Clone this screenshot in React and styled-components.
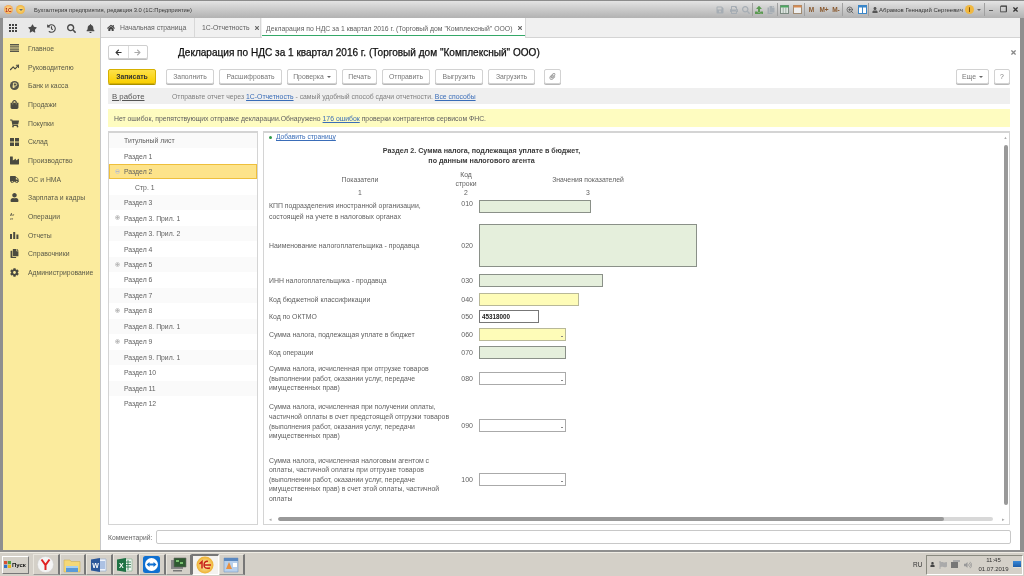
import React from 'react'
import styled, { createGlobalStyle } from 'styled-components'
import {
  FaStar, FaHistory, FaSearch, FaBell, FaHome, FaShoppingBag, FaShoppingCart, FaIndustry,
  FaTruck, FaUser, FaCopy, FaCog, FaPaperclip, FaSave, FaPrint, FaTimes, FaVolumeUp, FaFlag,
  FaArrowLeft, FaArrowRight, FaUpload,
} from 'react-icons/fa'
import { FiTrendingUp, FiZoomIn } from 'react-icons/fi'

const Global = createGlobalStyle`
  html, body { margin: 0; padding: 0; height: 576px; overflow: hidden; }
  body { font-family: "Liberation Sans", Arial, sans-serif; background: #d4d0c8; }
  * { box-sizing: border-box; }
`

// the reference is a scaled down capture, so everything is a touch soft
const Screen = styled.div`
  width: 1024px;
  height: 576px;
  display: flex;
  flex-direction: column;
  filter: blur(0.25px);
`

const Win = styled.div`
  height: 552px;
  display: flex;
  flex-direction: column;
  background: #8f8f8f;
  padding: 0 4px 2px 3px;
`

const TitleBar = styled.div`
  height: 18px;
  margin: 0 -4px 0 -3px;
  display: flex;
  align-items: center;
  padding: 0 0 0 4px;
  background: linear-gradient(#e4e4e4, #d4d4d4 30%, #b2b2b2);
  border-top: 1px solid #8c8c8c;
`

const Logo = styled.div`
  width: 9px;
  height: 9px;
  border-radius: 50%;
  margin-right: 3px;
  display: flex;
  align-items: center;
  justify-content: center;
  background: ${p => p.$red ? 'radial-gradient(#fff2a8, #f08a30)' : 'radial-gradient(#ffe27a, #e8a030)'};
  color: #b02010;
  font-size: 5px;
  font-weight: 700;
`

const AppName = styled.div`
  margin-left: 6px;
  font-size: 5.8px;
  color: #333;
  flex: 1;
  white-space: nowrap;
`

const TitleTools = styled.div`
  display: flex;
  align-items: center;
  height: 18px;
  padding-right: 3px;
`

const Tool = styled.span`
  width: ${p => p.$w || 12}px;
  display: flex;
  justify-content: center;
  align-items: center;
  color: ${p => p.$c || '#a6adb4'};
  font-size: ${p => p.$size || 8}px;
  font-weight: 700;
`

const ToolSep = styled.span`
  width: 1px;
  height: 13px;
  background: #a0a0a0;
`

const UserName = styled.span`
  display: flex;
  align-items: center;
  gap: 1px;
  width: 96px;
  padding-left: 3px;
  font-size: 6px;
  color: #333;
  white-space: nowrap;
`

const InfoDot = styled.span`
  width: 9px;
  height: 9px;
  border-radius: 50%;
  background: #f0b840;
  color: #805000;
  font-size: 7px;
  font-weight: 700;
  line-height: 9px;
  text-align: center;
`

const WinBody = styled.div`
  flex: 1;
  min-height: 0;
  display: flex;
  background: #fff;
`

const SidePane = styled.div`
  width: 98px;
  display: flex;
  flex-direction: column;
  border-right: 1px solid #c8c8c8;
`

const QuickBar = styled.div`
  height: 20px;
  display: flex;
  align-items: center;
  gap: 5.4px;
  padding-left: 3px;
  background: #e9e9e9;
  color: #4a4a4a;
  font-size: 9px;
`

const QuickIcon = styled.span`
  width: 14px;
  display: flex;
  justify-content: center;
`

const Dots = styled.span`
  display: grid;
  grid-template-columns: repeat(3, 2px);
  gap: 1px;
  & i { width: 2px; height: 2px; background: #444; }
`

const SideMenu = styled.div`
  flex: 1;
  background: #fbeb9d;
  padding-top: 1px;
`

const MenuItem = styled.div`
  height: 18.7px;
  display: flex;
  align-items: center;
  font-size: 6.85px;
  color: #5a5a48;
  white-space: nowrap;
`

const MenuGlyph = styled.span`
  width: 25px;
  padding-left: 7px;
  display: flex;
  justify-content: flex-start;
  align-items: center;
  color: #4a4a40;
  font-size: 9px;
`

const OpsGlyph = styled.span`
  font-size: 4px;
  line-height: 4px;
  color: #4a4a40;
`

const MainPane = styled.div`
  flex: 1;
  min-width: 0;
  display: flex;
  flex-direction: column;
`

const TabRow = styled.div`
  height: 20px;
  display: flex;
  background: #f0f0f0;
  border-bottom: 1px solid #d4d4d4;
`

const Tab = styled.div`
  width: ${p => p.$w}px;
  height: ${p => p.$active ? 20 : 19}px;
  display: flex;
  align-items: center;
  gap: 5px;
  padding: 0 0 0 ${p => p.$active ? 4 : 6}px;
  margin-right: ${p => p.$active ? 0 : 1}px;
  font-size: 6.85px;
  color: #5f5f5f;
  white-space: nowrap;
  background: ${p => p.$active ? '#fff' : '#f0f0f0'};
  border-right: 1px solid #d8d8d8;
  box-shadow: ${p => p.$active ? 'inset 0 -2px 0 #fff, inset 0 -3px 0 #34a868' : 'none'};
`

const TabClose = styled.span`
  margin-left: auto;
  margin-right: ${p => p.$far ? 5 : 7}px;
  color: #666;
  font-size: 6px;
  display: flex;
`

const Content = styled.div`
  flex: 1;
  min-height: 0;
  display: flex;
  flex-direction: column;
  padding: 0 10px 6px 7px;
`

const HeadRow = styled.div`
  height: 28px;
  display: flex;
  align-items: center;
`

const NavGroup = styled.div`
  width: 40px;
  height: 14px;
  display: flex;
  border: 1px solid #cfcfcf;
  border-radius: 2px;
  box-shadow: 0 1px 0 #bdbdbd;
  margin-right: 30px;
`

const NavBtn = styled.span`
  flex: 1;
  display: flex;
  justify-content: center;
  align-items: center;
  color: ${p => p.$off ? '#aaa' : '#333'};
  font-size: 7px;
  & + & { border-left: 1px solid #ddd; }
`

const FormTitle = styled.div`
  flex: 1;
  font-size: 10.05px;
  color: #111;
  -webkit-text-stroke: 0.25px #111;
  white-space: nowrap;
`

const CloseForm = styled.span`
  margin-right: -7px;
  color: #888;
  font-size: 7px;
  display: flex;
`

const CommandBar = styled.div`
  height: 15px;
  margin-top: 3px;
  display: flex;
  gap: 5px;
`

const Btn = styled.div`
  width: ${p => p.$w}px;
  margin-left: ${p => p.$ml || 0}px;
  display: flex;
  align-items: center;
  justify-content: center;
  gap: 3px;
  font-size: 6.85px;
  color: #777;
  background: #fff;
  border: 1px solid #d2d2d2;
  border-radius: 2px;
  box-shadow: 0 1px 0 #b8b8b8;
  white-space: nowrap;
`

const SaveBtn = styled(Btn)`
  font-weight: 700;
  color: #333;
  background: linear-gradient(#fde14a, #f9cf00);
  border-color: #d6b000;
  box-shadow: 0 1px 0 #a89000;
`

const Caret = styled.span`
  width: 0;
  height: 0;
  border-left: 2px solid transparent;
  border-right: 2px solid transparent;
  border-top: 2px solid #666;
`

const Spacer = styled.div`
  flex: 1;
`

const StatusBar = styled.div`
  height: 16px;
  margin-top: 4px;
  display: flex;
  align-items: center;
  padding-left: 4px;
  background: #efefef;
  font-size: 6.85px;
  color: #808080;
  white-space: nowrap;
`

const StateLink = styled.span`
  width: 60px;
  font-size: 7.8px;
  color: #555;
  text-decoration: underline;
`

const A = styled.span`
  color: #3a6db8;
  text-decoration: underline;
`

const Notice = styled.div`
  height: 18px;
  margin-top: 5px;
  display: flex;
  align-items: center;
  padding-left: 6px;
  background: #fefcc0;
  font-size: 6.85px;
  color: #5f5f5f;
  white-space: nowrap;
`

const Panels = styled.div`
  flex: 1;
  min-height: 0;
  margin-top: 4px;
  display: flex;
  gap: 5px;
`

const SectionList = styled.div`
  width: 150px;
  border: 1px solid #d4d4d4;
  border-top-width: 2px;
`

const SectionRow = styled.div`
  height: 15.47px;
  display: flex;
  align-items: center;
  padding-left: ${p => p.$sub ? 26 : 15}px;
  position: relative;
  font-size: 6.85px;
  color: #5f5f5f;
  background: ${p => p.$sel ? '#fde38a' : p.$odd ? '#fafafa' : '#fff'};
  outline: ${p => p.$sel ? '1px solid #eebf3c' : 'none'};
  outline-offset: -1px;
`

const Expander = styled.span`
  position: absolute;
  left: 6px;
  top: 5px;
  width: 5px;
  height: 5px;
  border-radius: 50%;
  border: 1px solid #ccc;
  background:
    linear-gradient(#bbb, #bbb) center / 3px 1px no-repeat
    ${p => p.$open ? '' : ', linear-gradient(#bbb, #bbb) center / 1px 3px no-repeat'};
`

const SheetPanel = styled.div`
  flex: 1;
  min-width: 0;
  display: flex;
  flex-direction: column;
  border: 1px solid #d4d4d4;
  border-top-width: 2px;
`

const SheetMain = styled.div`
  flex: 1;
  min-height: 0;
  display: flex;
`

const Sheet = styled.div`
  flex: 1;
  padding: 0 0 0 5px;
  color: #5f5f5f;
`

const AddLine = styled.div`
  height: 8px;
  display: flex;
  align-items: center;
  gap: 4px;
  font-size: 6.7px;
  line-height: 8px;
`

const Plus = styled.span`
  width: 3px;
  height: 3px;
  border-radius: 50%;
  background: #2e9a48;
`

const SheetTitle = styled.div`
  width: 425px;
  margin-top: 6px;
  text-align: center;
  font-size: 7.17px;
  line-height: 9.5px;
  font-weight: 700;
  color: #3a3a3a;
`

const ColHead = styled.div`
  height: 26px;
  display: grid;
  grid-template-columns: 182px 30px 214px;
  align-items: center;
  text-align: center;
  font-size: 6.85px;
  line-height: 9px;
`

const ColNums = styled(ColHead)`
  height: 9px;
  margin-top: -4px;
  margin-bottom: 2.5px;
`

const FormRow = styled.div`
  height: ${p => p.$h}px;
  display: grid;
  grid-template-columns: 178px 20px 1fr;
  column-gap: 6px;
  align-items: ${p => p.$top ? 'start' : 'center'};
`

const RowLabel = styled.div`
  font-size: 6.9px;
  line-height: ${p => p.$small ? 9.6 : 11}px;
  color: #5f5f5f;
  white-space: nowrap;
  padding-bottom: ${p => p.$up || 0}px;
`

const RowCode = styled.div`
  font-size: 7px;
  text-align: right;
  color: #5f5f5f;
`

const fieldBg = { green: '#e5efdc', yellow: '#fefcb8', white: '#fff', value: '#fff' }
const fieldLine = { green: '#8a9088', yellow: '#b8b898', white: '#aaa', value: '#777' }

const Field = styled.div`
  position: relative;
  width: ${p => p.$w}px;
  height: ${p => p.$h || 13}px;
  background: ${p => fieldBg[p.$kind]};
  border: 1px solid ${p => fieldLine[p.$kind]};
  font-size: 6.3px;
  font-weight: 700;
  line-height: 11px;
  padding-left: 2px;
  color: #222;
`

const Drop = styled.span`
  position: absolute;
  right: 2px;
  bottom: 3px;
  width: 2px;
  height: 1px;
  background: #888;
`

const VScroll = styled.div`
  width: 7px;
  display: flex;
  flex-direction: column;
  align-items: center;
  padding-top: 2px;
  color: #aaa;
  font-size: 4px;
`

const VThumb = styled.div`
  width: 4px;
  height: 360px;
  margin-top: 5px;
  border-radius: 2px;
  background: #999;
`

const HScroll = styled.div`
  height: 11px;
  display: flex;
  align-items: center;
  padding: 0 4px 0 5px;
  color: #aaa;
  font-size: 5px;
`

const HTrack = styled.div`
  width: 715px;
  margin-left: 6px;
  height: 4px;
  border-radius: 2px;
  background: #d8d8d8;
  overflow: hidden;
`

const HThumb = styled.div`
  width: 666px;
  height: 4px;
  border-radius: 2px;
  background: #999;
`

const CommentRow = styled.div`
  height: 14px;
  margin-top: 5px;
  display: flex;
  align-items: center;
  gap: 4px;
  font-size: 6.75px;
  color: #666;
`

const CommentInput = styled.div`
  flex: 1;
  height: 14px;
  margin-right: -1px;
  border: 1px solid #c8c8c8;
  border-radius: 2px;
`

const Taskbar = styled.div`
  flex: 1;
  display: flex;
  align-items: center;
  padding: 0 1px 0 2px;
  background: #d4d0c8;
  border-top: 1px solid #efece4;
`

const StartBtn = styled.div`
  width: 27px;
  height: 18px;
  display: flex;
  align-items: center;
  gap: 1px;
  padding-left: 1px;
  margin-right: 4px;
  font-size: 6px;
  font-weight: 700;
  color: #111;
  border: 1px solid;
  border-color: #fff #777 #777 #fff;
`

const TaskBtn = styled.div`
  width: 26.5px;
  height: 21px;
  display: flex;
  justify-content: center;
  align-items: center;
  background: ${p => p.$active ? '#f4f2ee' : 'transparent'};
  border-style: solid;
  border-color: ${p => p.$active ? '#777 #fff #fff #777' : '#e8e5dd #777 #999 #e8e5dd'};
  border-width: ${p => p.$active ? '2px 1px 1px 1px' : '1px 2px 1px 1px'};
`

const Lang = styled.div`
  margin-left: auto;
  width: 13px;
  font-size: 6.5px;
  color: #333;
`

const Tray = styled.div`
  width: 97px;
  height: 20px;
  display: flex;
  align-items: center;
  gap: 4px;
  padding-left: 3px;
  color: #888;
  font-size: 8px;
  border: 1px solid;
  border-color: #8a8a80 #fff #fff #8a8a80;
`

const Clock = styled.div`
  width: 31px;
  margin-left: 2px;
  text-align: center;
  font-size: 6px;
  line-height: 9px;
  color: #333;
`

const DesktopBtn = styled.span`
  width: 8px;
  height: 7px;
  background: linear-gradient(#3a8ad8, #1c5ca8);
  border-bottom: 1px solid #e4e0d4;
`

const tabX = <FaTimes />

const sideItems = [
  ['Главное', <svg width="9" height="8" viewBox="0 0 9 8"><path d="M0 0h9v1.5H0zM0 2.2h9v1.4H0zM0 4.4h9v1.4H0zM0 6.5h9V8H0z" fill="#55554a" /></svg>],
  ['Руководителю', <FiTrendingUp style={{ strokeWidth: 3 }} />],
  ['Банк и касса', <svg width="9" height="9" viewBox="0 0 9 9"><circle cx="4.5" cy="4.5" r="4.5" fill="#55554a" /><path d="M3.4 7V2h1.8a1.4 1.4 0 0 1 0 3H2.6M2.6 6h2.6" fill="none" stroke="#fbeb9d" strokeWidth=".9" /></svg>],
  ['Продажи', <FaShoppingBag />],
  ['Покупки', <FaShoppingCart />],
  ['Склад', <svg width="9" height="8" viewBox="0 0 9 8"><path d="M0 0h4v3.5H0zM5 0h4v3.5H5zM0 4.5h4V8H0zM5 4.5h4V8H5z" fill="#4a4a40" /></svg>],
  ['Производство', <FaIndustry />],
  ['ОС и НМА', <FaTruck />],
  ['Зарплата и кадры', <FaUser />],
  ['Операции', <OpsGlyph>Ат<br />кг</OpsGlyph>],
  ['Отчеты', <svg width="9" height="8" viewBox="0 0 9 8"><path d="M0 3h2v5H0zM3.2 1h2v7h-2zM6.4 3.6h2V8h-2z" fill="#4a4a40" /></svg>],
  ['Справочники', <FaCopy />],
  ['Администрирование', <FaCog />],
]

const sections = [
  ['Титульный лист'], ['Раздел 1'], ['Раздел 2', 'sel'], ['Стр. 1', 'sub'], ['Раздел 3'],
  ['Раздел 3. Прил. 1', 'exp'], ['Раздел 3. Прил. 2'], ['Раздел 4'], ['Раздел 5', 'exp'],
  ['Раздел 6'], ['Раздел 7'], ['Раздел 8', 'exp'], ['Раздел 8. Прил. 1'], ['Раздел 9', 'exp'],
  ['Раздел 9. Прил. 1'], ['Раздел 10'], ['Раздел 11'], ['Раздел 12'],
]

const rows = [
  { h: 21, code: '010', top: true, label: <>КПП подразделения иностранной организации,<br />состоящей на учете в налоговых органах</>, w: 112, kind: 'green' },
  { h: 50, code: '020', label: 'Наименование налогоплательщика - продавца', w: 218, fh: 43, kind: 'green' },
  { h: 20, code: '030', label: 'ИНН налогоплательщика - продавца', w: 124, kind: 'green' },
  { h: 17, code: '040', label: 'Код бюджетной классификации', w: 100, kind: 'yellow' },
  { h: 18, code: '050', label: 'Код по ОКТМО', w: 60, kind: 'value', value: '45318000' },
  { h: 18, code: '060', label: 'Сумма налога, подлежащая уплате в бюджет', w: 87, kind: 'yellow', drop: true },
  { h: 18, code: '070', label: 'Код операции', w: 87, kind: 'green' },
  { h: 34, code: '080', small: true, label: <>Сумма налога, исчисленная при отгрузке товаров<br />(выполнении работ, оказании услуг, передаче<br />имущественных прав)</>, w: 87, kind: 'white', drop: true },
  { h: 60, code: '090', small: true, up: 8, label: <>Сумма налога, исчисленная при получении оплаты,<br />частичной оплаты в счет предстоящей отгрузки товаров<br />(выполнения работ, оказания услуг, передачи<br />имущественных прав)</>, w: 87, kind: 'white', drop: true },
  { h: 48, code: '100', small: true, label: <>Сумма налога, исчисленная налоговым агентом с<br />оплаты, частичной оплаты при отгрузке товаров<br />(выполнении работ, оказании услуг, передаче<br />имущественных прав) в счет этой оплаты, частичной<br />оплаты</>, w: 87, kind: 'white', drop: true },
]

const WordIcon = () => (
  <svg width="16" height="16" viewBox="0 0 16 16">
    <path d="M6 2h9v12H6z" fill="#eef2fa" stroke="#8aa4cc" strokeWidth=".6" />
    <path d="M9 5h5M9 7h5M9 9h5M9 11h5" stroke="#4a78c0" strokeWidth=".8" />
    <path d="M0 2.5 9 1v14L0 13.500z" fill="#2a5699" />
    <text x="1.2" y="10.500" fontSize="7" fontWeight="700" fill="#fff" fontFamily="Liberation Sans">W</text>
  </svg>
)

const ExcelIcon = () => (
  <svg width="16" height="16" viewBox="0 0 16 16">
    <path d="M6 2h9v12H6z" fill="#eef6f0" stroke="#7cae8c" strokeWidth=".6" />
    <path d="M9 5h5M9 7.500h5M9 10h5M11 3v10" stroke="#207245" strokeWidth=".8" />
    <path d="M0 2.500 9 1v14L0 13.500z" fill="#207245" />
    <text x="2" y="10.500" fontSize="7" fontWeight="700" fill="#fff" fontFamily="Liberation Sans">X</text>
  </svg>
)

const TeamViewerIcon = () => (
  <svg width="17" height="17" viewBox="0 0 17 17">
    <rect width="17" height="17" rx="2.500" fill="#0e6fd0" />
    <circle cx="8.500" cy="8.500" r="6.500" fill="#fff" />
    <path d="M3.500 8.500 6.500 6v1.500h4V6l3 2.500-3 2.500V9.500h-4V11z" fill="#0e6fd0" />
  </svg>
)

const App = () => (
  <>
    <Global />
    <Screen>
      <Win>
        <TitleBar>
          <Logo $red>1С</Logo>
          <Logo><Caret /></Logo>
          <AppName>Бухгалтерия предприятия, редакция 3.0  (1С:Предприятие)</AppName>
          <TitleTools>
            <Tool $w={16}><FaSave /></Tool>
            <Tool><FaPrint /></Tool>
            <Tool><FaSearch /></Tool>
            <ToolSep />
            <Tool $c="#5a9a50"><FaUpload /></Tool>
            <Tool><FaCopy /></Tool>
            <ToolSep />
            <Tool $w={13}>
              <svg width="9" height="9" viewBox="0 0 9 9"><rect x=".5" y=".5" width="8" height="8" fill="#dde6e0" stroke="#7a8a80" /><path d="M.5 .5h8v2h-8z" fill="#4ca860" /><path d="M3.200 2.500v6M5.800 2.500v6" stroke="#7a8a80" strokeWidth=".6" /></svg>
            </Tool>
            <Tool $w={13}>
              <svg width="9" height="9" viewBox="0 0 9 9"><rect x=".5" y=".5" width="8" height="8" fill="#eee" stroke="#a08a70" /><path d="M.5 .5h8v2h-8z" fill="#d88a50" /></svg>
            </Tool>
            <ToolSep />
            <Tool $c="#8a5a30" $w={13} $size={6.5}>М</Tool>
            <Tool $c="#8a5a30" $w={12} $size={6.5}>М+</Tool>
            <Tool $c="#8a5a30" $w={12} $size={6.5}>М-</Tool>
            <ToolSep />
            <Tool $c="#444" $w={13}><FiZoomIn /></Tool>
            <Tool $w={12}>
              <svg width="9" height="9" viewBox="0 0 9 9"><rect x=".5" y=".5" width="8" height="8" fill="#fff" stroke="#3a86c8" /><path d="M.5 .5h8v1.500h-8zM4.500 .5v8" stroke="#3a86c8" fill="#3a86c8" /></svg>
            </Tool>
            <ToolSep />
            <UserName><FaUser size={6} color="#555" />Абрамов Геннадий Сергеевич</UserName>
            <InfoDot>i</InfoDot>
            <Tool $w={10} $c="#333" $size={7}><Caret /></Tool>
            <ToolSep />
            <Tool $w={12} $c="#333" $size={8}>–</Tool>
            <Tool $w={12} $c="#333" $size={8}>❐</Tool>
            <Tool $w={12} $c="#333" $size={7}><FaTimes /></Tool>
          </TitleTools>
        </TitleBar>
        <WinBody>
          <SidePane>
            <QuickBar>
              <QuickIcon><Dots>{Array.from({ length: 9 }, (_, i) => <i key={i} />)}</Dots></QuickIcon>
              <QuickIcon><FaStar /></QuickIcon>
              <QuickIcon><FaHistory /></QuickIcon>
              <QuickIcon><FaSearch /></QuickIcon>
              <QuickIcon><FaBell /></QuickIcon>
            </QuickBar>
            <SideMenu>
              {sideItems.map(([name, icon]) => (
                <MenuItem key={name}><MenuGlyph>{icon}</MenuGlyph>{name}</MenuItem>
              ))}
            </SideMenu>
          </SidePane>
          <MainPane>
            <TabRow>
              <Tab $w={94}><FaHome size={8} color="#444" />Начальная страница</Tab>
              <Tab $w={65}>1С-Отчетность<TabClose>{tabX}</TabClose></Tab>
              <Tab $w={264} $active>Декларация по НДС за 1 квартал 2016 г. (Торговый дом "Комплексный" ООО)<TabClose $far>{tabX}</TabClose></Tab>
            </TabRow>
            <Content>
              <HeadRow>
                <NavGroup>
                  <NavBtn><FaArrowLeft /></NavBtn>
                  <NavBtn $off><FaArrowRight /></NavBtn>
                </NavGroup>
                <FormTitle>Декларация по НДС за 1 квартал 2016 г. (Торговый дом "Комплексный" ООО)</FormTitle>
                <CloseForm><FaTimes /></CloseForm>
              </HeadRow>
              <CommandBar>
                <SaveBtn as="div" $w={48}>Записать</SaveBtn>
                <Btn $w={48} $ml={5}>Заполнить</Btn>
                <Btn $w={63}>Расшифровать</Btn>
                <Btn $w={50}>Проверка <Caret /></Btn>
                <Btn $w={35}>Печать</Btn>
                <Btn $w={48}>Отправить</Btn>
                <Btn $w={48}>Выгрузить</Btn>
                <Btn $w={47}>Загрузить</Btn>
                <Btn $w={17} $ml={4}><FaPaperclip color="#999" /></Btn>
                <Spacer />
                <Btn $w={33}>Еще <Caret /></Btn>
                <Btn $w={16}>?</Btn>
              </CommandBar>
              <StatusBar>
                <StateLink>В работе</StateLink>
                Отправьте отчет через&nbsp;<A>1С-Отчетность</A>&nbsp;- самый удобный способ сдачи отчетности.&nbsp;<A>Все способы</A>
              </StatusBar>
              <Notice>
                Нет ошибок, препятствующих отправке декларации.Обнаружено&nbsp;<A>176 ошибок</A>&nbsp;проверки контрагентов сервисом ФНС.
              </Notice>
              <Panels>
                <SectionList>
                  {sections.map(([name, flag], i) => (
                    <SectionRow key={name} $sel={flag === 'sel'} $sub={flag === 'sub'} $odd={i % 2 === 0}>
                      {(flag === 'exp' || flag === 'sel') && <Expander $open={flag === 'sel'} />}
                      {name}
                    </SectionRow>
                  ))}
                </SectionList>
                <SheetPanel>
                  <SheetMain>
                    <Sheet>
                      <AddLine><Plus /><A>Добавить страницу</A></AddLine>
                      <SheetTitle>Раздел 2. Сумма налога, подлежащая уплате в бюджет,<br />по данным налогового агента</SheetTitle>
                      <ColHead>
                        <span>Показатели</span>
                        <span>Код<br />строки</span>
                        <span>Значения показателей</span>
                      </ColHead>
                      <ColNums>
                        <span>1</span>
                        <span>2</span>
                        <span>3</span>
                      </ColNums>
                      {rows.map(r => (
                        <FormRow key={r.code} $h={r.h} $top={r.top}>
                          <RowLabel $small={r.small} $up={r.up}>{r.label}</RowLabel>
                          <RowCode>{r.code}</RowCode>
                          <Field $w={r.w} $h={r.fh} $kind={r.kind}>
                            {r.value}
                            {r.drop && <Drop />}
                          </Field>
                        </FormRow>
                      ))}
                    </Sheet>
                    <VScroll>
                      ▲
                      <VThumb />
                    </VScroll>
                  </SheetMain>
                  <HScroll>
                    ◂
                    <HTrack><HThumb /></HTrack>
                    <Spacer />
                    ▸
                  </HScroll>
                </SheetPanel>
              </Panels>
              <CommentRow>
                Комментарий:
                <CommentInput />
              </CommentRow>
            </Content>
          </MainPane>
        </WinBody>
      </Win>
      <Taskbar>
        <StartBtn>
          <svg width="7" height="7" viewBox="0 0 7 7"><path d="M0 0h3.200v3.200H0z" fill="#d85030" /><path d="M3.800 0H7v3.200H3.800z" fill="#50a040" /><path d="M0 3.800h3.200V7H0z" fill="#3070c8" /><path d="M3.800 3.800H7V7H3.800z" fill="#e8b820" /></svg>
          Пуск
        </StartBtn>
        <TaskBtn>
          <svg width="17" height="17" viewBox="0 0 17 17"><circle cx="8.500" cy="8.500" r="8" fill="#f4f4f4" stroke="#ccc" strokeWidth=".5" /><path d="M4.500 3.500 8.500 9l4-5.500M8.500 9v5" fill="none" stroke="#e02020" strokeWidth="2" /></svg>
        </TaskBtn>
        <TaskBtn>
          <svg width="18" height="16" viewBox="0 0 18 16"><path d="M1 3h6l1 1.500h9V15H1z" fill="#f4d878" stroke="#c8a848" strokeWidth=".5" /><path d="M3 9h12v6H3z" fill="#5a9ad8" /><path d="M3 9h12v2H3z" fill="#a8d0f0" /></svg>
        </TaskBtn>
        <TaskBtn><WordIcon /></TaskBtn>
        <TaskBtn><ExcelIcon /></TaskBtn>
        <TaskBtn><TeamViewerIcon /></TaskBtn>
        <TaskBtn>
          <svg width="17" height="15" viewBox="0 0 17 15"><path d="M1 3h12v9H1z" fill="#888" /><path d="M4 1h12v9H4z" fill="#2e5a30" stroke="#666" strokeWidth=".6" /><path d="M6 3h3v2H6zM10 5h3v2h-3z" fill="#7ac070" /><path d="M3 13h9v1.500H3z" fill="#777" /></svg>
        </TaskBtn>
        <TaskBtn $active>
          <svg width="18" height="18" viewBox="0 0 18 18"><defs><radialGradient id="oneC"><stop offset="0" stopColor="#fff6c0" /><stop offset="1" stopColor="#eeb030" /></radialGradient></defs><circle cx="9" cy="9" r="8.500" fill="url(#oneC)" /><path d="M3.500 8 6 5.500v7M8 9c0-3 2-4 4-3.500M8 9c0 3 2 3.800 6 3M8.500 9H15" fill="none" stroke="#c82018" strokeWidth="1.500" /></svg>
        </TaskBtn>
        <TaskBtn>
          <svg width="16" height="16" viewBox="0 0 16 16"><path d="M1 1h14v14H1z" fill="#b8d0ec" stroke="#7a98c0" strokeWidth=".6" /><path d="M1 1h14v3H1z" fill="#5a88c0" /><path d="M3 12 6 5l3 7z" fill="#e89040" /><path d="M10 6h4v4h-4z" fill="#fff" /></svg>
        </TaskBtn>
        <Lang>RU</Lang>
        <Tray>
          <FaUser size={5} color="#444" />
          <FaFlag size={8} color="#aaa" />
          <svg width="9" height="9" viewBox="0 0 9 9"><path d="M0 2h7v6H0z" fill="#777" /><path d="M2 0h7v2H2z" fill="#aaa" /></svg>
          <FaVolumeUp size={8} color="#999" />
          <Clock>11:45<br />01.07.2019</Clock>
          <DesktopBtn />
        </Tray>
      </Taskbar>
    </Screen>
  </>
)

export default App
